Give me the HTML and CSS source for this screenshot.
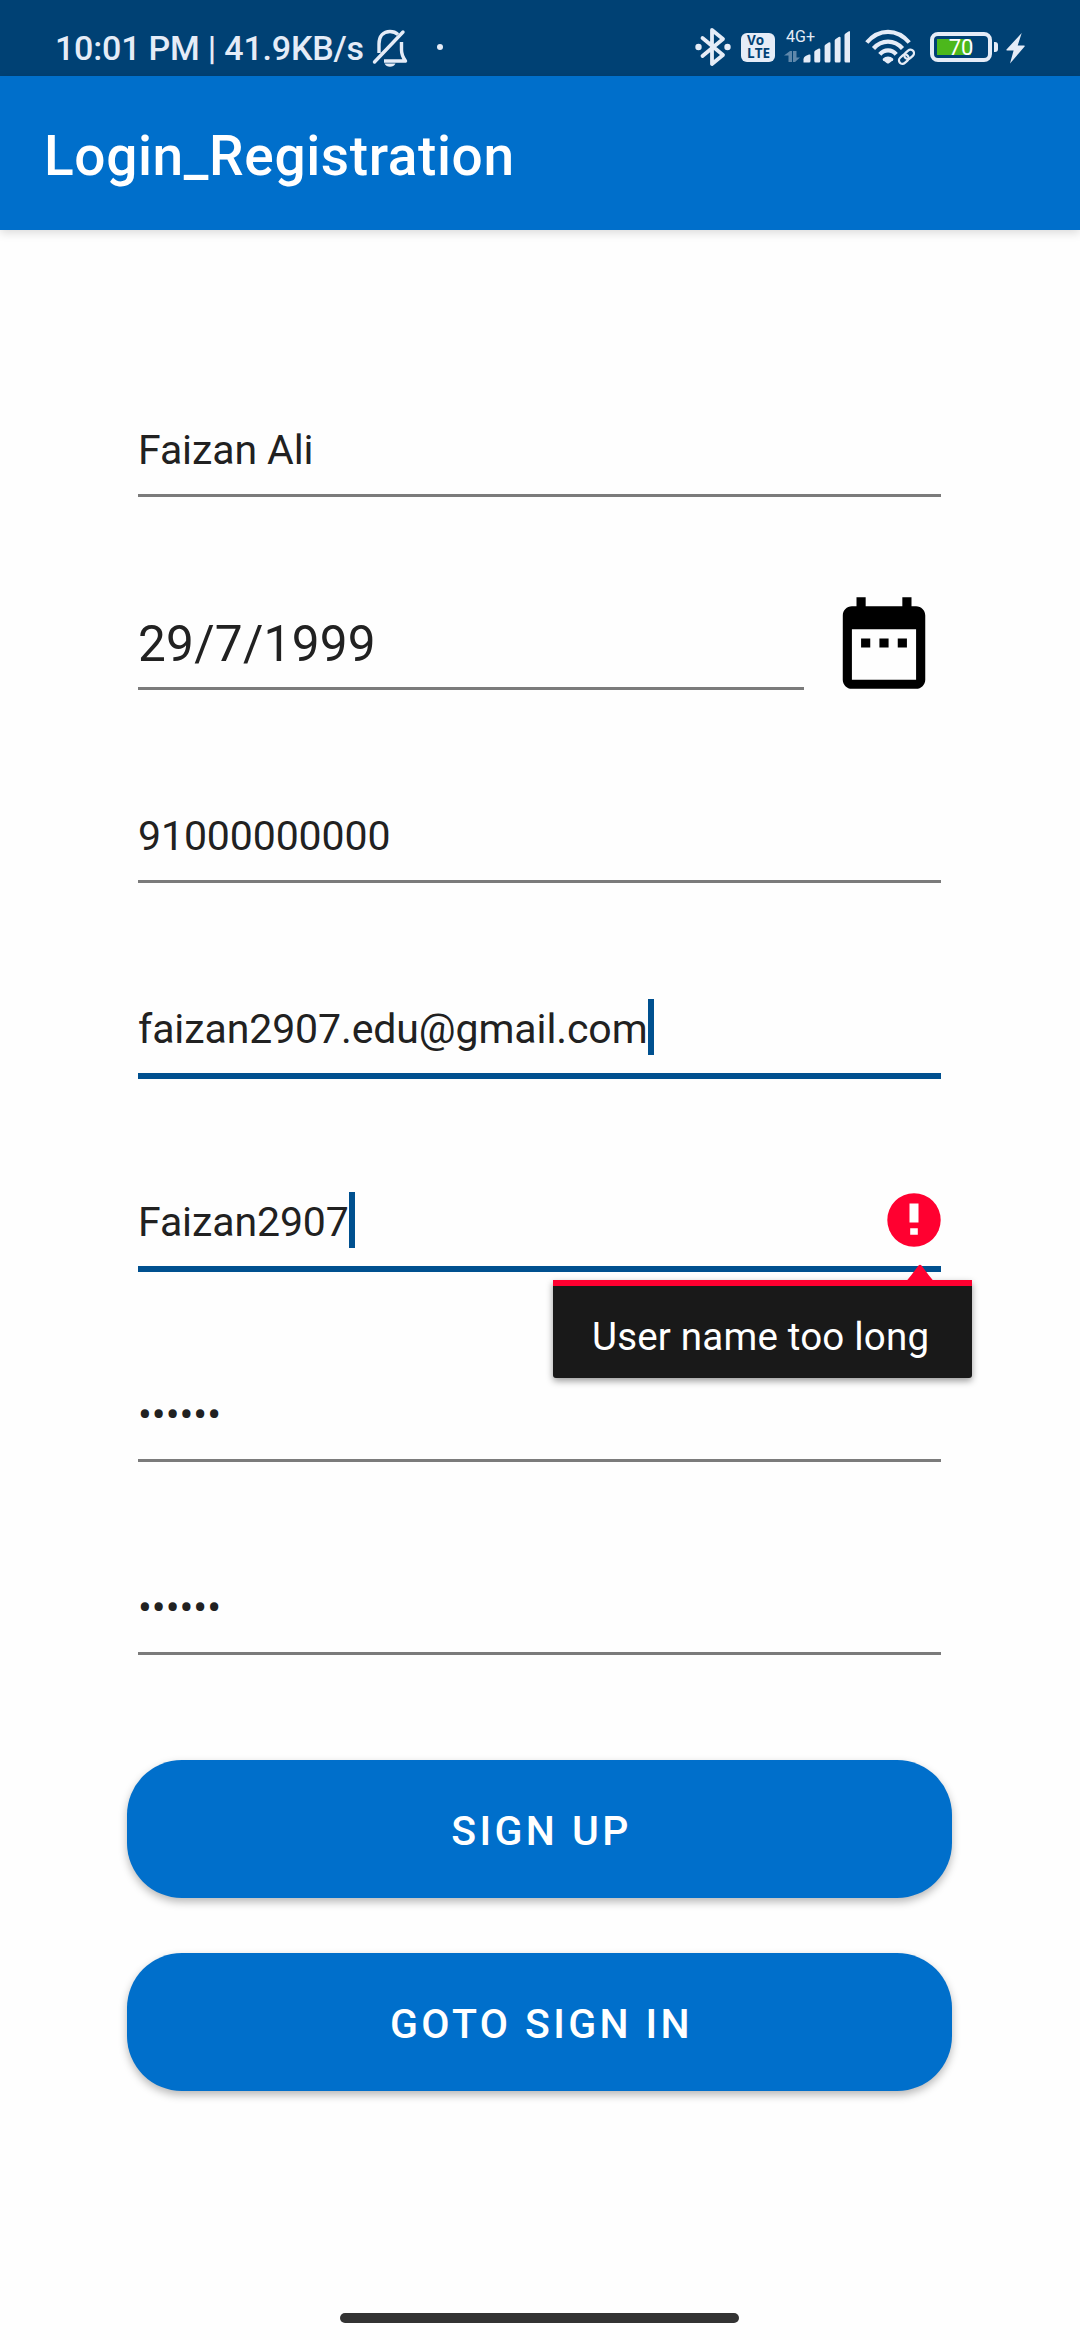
FILE: index.html
```html
<!DOCTYPE html>
<html lang="en">
<head>
<meta charset="utf-8">
<title>Login_Registration</title>
<link rel="stylesheet" href="styles.css">
</head>
<body>
<div class="screen">
  <header class="status">
    <span class="clock">10:01 PM | 41.9KB/s</span>
    <svg class="bell" width="36" height="40" viewBox="0 0 36 40" fill="none" stroke="#e5ecf7" stroke-width="3.4">
      <path d="M2.5 34L31 4" stroke-linecap="round"/>
      <path d="M7 25V16C7 8 11.500 3.500 18 3.500c3.500 0 6 1.100 8 3"/>
      <path d="M29.500 14v8c0 5 1.500 7.500 4 11H12" stroke-linejoin="round"/>
      <path d="M12.500 35.500h11c-1.200 2.400-3 3.300-5.500 3.300s-4.300-.9-5.500-3.300z" fill="#e5ecf7" stroke="none"/>
    </svg>
    <span class="notice-dot"></span>
    <div class="indicators">
      <svg class="bluetooth" width="36" height="40" viewBox="0 0 36 40" fill="none" stroke="#e5ecf7" stroke-width="3.800" stroke-linecap="round" stroke-linejoin="round">
        <path d="M7.500 11L28 28 17 37V3l11 9L7.500 29"/>
        <circle cx="3.500" cy="20" r="3.200" fill="#e5ecf7" stroke="none"/>
        <circle cx="32.500" cy="20" r="3.200" fill="#e5ecf7" stroke="none"/>
      </svg>
      <span class="volte"><span>Vo</span><span>LTE</span></span>
      <div class="mobile">
        <span class="network">4G+</span>
        <svg class="signal" width="66" height="34" viewBox="0 0 66 34" fill="#e5ecf7">
          <path opacity=".42" d="M0 26.500l6-4.500h2v11H4.500v-6.500zM9 22h3.500v6.500H16L11 33H9z"/>
          <path d="M19.500 33.500v-3.200c0-1.500 1-2.800 2.500-3.500l3-1.300q1.500-.5 1.500 1v5.500q0 1.500-1.500 1.500z"/>
          <path d="M30.300 23q0-1 1-1.500l3-1.800q2-.9 2 .8V32q0 1.500-1.500 1.500h-3q-1.500 0-1.500-1.500zM40.600 17q0-1 1-1.500l3-1.900q1.900-.8 1.900.8V32q0 1.500-1.500 1.500h-3q-1.400 0-1.400-1.500zM50.700 11.500q0-1 1-1.500l3-1.900q1.900-.8 1.900.8V32q0 1.500-1.500 1.500h-3q-1.400 0-1.400-1.500zM60.500 6q0-1 1-1.600l2.900-1.900q2-.8 2 .8V32q0 1.500-1.500 1.500H62q-1.500 0-1.500-1.500z"/>
        </svg>
      </div>
      <svg class="wifi" width="50" height="36" viewBox="0 0 50 36" fill="none" stroke="#e5ecf7" stroke-width="4.200">
        <path d="M1.800 13.500C14 -.7 32 -.7 44.200 13.500M8.500 19.500c8-9.200 21-9.200 29 0M14.800 25.300c4.500-5.300 12-5.300 16.400 0"/>
        <path d="M18 29.500c2.500-2.700 7.500-2.700 10 0q.8.900 0 1.700L24.400 34q-1.400 1-2.800 0L18 31.200q-.8-.8 0-1.700z" fill="#e5ecf7" stroke="none"/>
        <g stroke="#004174" stroke-width="6"><path d="M36 33l10-9"/></g>
        <g stroke-width="2.300" transform="rotate(-42 41.500 28)"><rect x="32.800" y="24.300" width="10.500" height="7" rx="3.500"/><rect x="40" y="24.300" width="10.500" height="7" rx="3.500"/></g>
      </svg>
      <div class="battery"><span>70</span></div>
      <i class="battery-nub"></i>
      <svg class="bolt" width="20" height="32" viewBox="0 0 20 32" fill="#e5ecf7"><path d="M15.700 1L.5 17.500q-.5.800.5 1h6.600L4 31.500 18.600 14.500q.6-.9-.5-1h-6.400z"/></svg>
    </div>
  </header>

  <div class="appbar"><h1>Login_Registration</h1></div>

  <main>
    <div class="field"><div class="value">Faizan Ali</div><i class="line"></i></div>
    <div class="date-row">
      <div class="field date"><div class="value">29/7/1999</div><i class="line"></i></div>
      <svg class="calendar" width="110" height="110" viewBox="0 0 24 24"><path d="M9 11H7v2h2v-2zm4 0h-2v2h2v-2zm4 0h-2v2h2v-2zm2-7h-1V2h-2v2H8V2H6v2H5c-1.110 0-1.990.9-1.990 2L3 20c0 1.100.89 2 2 2h14c1.100 0 2-.9 2-2V6c0-1.100-.9-2-2-2zm0 16H5V9h14v11z"/></svg>
    </div>
    <div class="field"><div class="value">91000000000</div><i class="line"></i></div>
    <div class="field focus"><div class="value">faizan2907.edu@gmail.com<i class="caret"></i></div><i class="line"></i></div>
    <div class="field focus">
      <div class="value">Faizan2907<i class="caret"></i>
        <svg class="alert" width="54" height="54" viewBox="0 0 54 54"><circle cx="27" cy="27" r="26.700" fill="#ff0030"/><path d="M22.500 10.500h9v19h-9zM23.200 35.200h7.600v6.600h-7.600z" fill="#fff"/></svg>
      </div>
      <i class="line"></i>
      <div class="error"><svg class="pointer" width="28" height="17" viewBox="0 0 28 17"><path d="M.5 17L5 11.500 12.500 1.500Q14 .2 15.500 1.500L23 11.500 27.500 17z" fill="#ff0030"/></svg>User name too long</div>
    </div>
    <div class="field"><div class="value secret">••••••</div><i class="line"></i></div>
    <div class="field"><div class="value secret">••••••</div><i class="line"></i></div>
    <div class="actions">
      <button>SIGN UP</button>
      <button>GOTO SIGN IN</button>
    </div>
  </main>
  <i class="home"></i>
</div>
</body>
</html>
```
FILE: styles.css
```css
* { box-sizing: border-box; }
body { margin: 0; background: #fefefe; font-family: Roboto, sans-serif; }
i { display: block; }
svg { display: block; flex: none; }
.screen { width: 1080px; height: 2340px; display: flex; flex-direction: column; overflow: hidden; color: #212121; }

.status { height: 76px; flex: none; background: #004174; display: flex; align-items: flex-start; padding-left: 55px; color: #e5ecf7; }
.clock { width: 317px; font-size: 34px; font-weight: 500; line-height: 40px; padding-top: 28px; letter-spacing: -.2px; white-space: nowrap; }
.bell { margin-top: 28px; }
.notice-dot { width: 6px; height: 6px; border-radius: 50%; background: #e5ecf7; margin: 44px 0 0 29px; }
.indicators { display: flex; align-items: flex-start; margin-left: 252px; }
.bluetooth { margin-top: 27px; }
.volte { width: 34px; height: 29px; margin: 33px 0 0 10px; border-radius: 6px; background: #e5ecf7; color: #004174; font: 700 13.5px/13px "Open Sans", sans-serif; padding: 1px 0 0 6px; display: flex; flex-direction: column; }
.mobile { margin: 29px 0 0 9px; width: 68px; display: grid; }
.mobile > * { grid-area: 1 / 1; }
.network { font-size: 16px; line-height: 16px; padding-left: 2px; }
.wifi { margin: 29px 0 0 13px; }
.battery { width: 62px; height: 30px; margin: 32px 0 0 15px; border: 4px solid #e5ecf7; border-radius: 8px; background: linear-gradient(#4cb81c, #4cb81c) 3px 3px / 34px 16px no-repeat; font-size: 22px; line-height: 23px; text-align: center; color: #fff; }
.battery-nub { width: 4px; height: 10px; margin: 42px 0 0 2px; border-radius: 0 3px 3px 0; background: #e5ecf7; }
.bolt { margin: 32px 0 0 8px; }

.appbar { height: 154px; flex: none; background: #006fcb; color: #fff; padding: 48px 0 0 44px; box-shadow: 0 3px 9px rgba(0,0,0,.14); }
h1 { margin: 0; font-size: 55px; font-weight: 500; line-height: 64px; letter-spacing: .62px; }

main { padding: 114px 139px 0 138px; height: 2083px; flex: none; }
.field { height: 193px; position: relative; }
.value { height: 150px; padding-bottom: 16px; display: flex; align-items: flex-end; font-size: 41px; line-height: 56px; letter-spacing: -.1px; }
.secret { letter-spacing: 0; }
.line { height: 3px; background: #7b7b7b; }
.focus .line { height: 6px; background: #00508f; }
.caret { width: 6px; height: 56px; background: #00508f; margin-bottom: 2px; }
.date-row { display: flex; }
.date { width: 666px; }
.date .value { font-size: 49.5px; padding-bottom: 15px; letter-spacing: .25px; }
.calendar { margin: 51px 0 0 25px; }
.alert { margin: 0 0 3px auto; }
.error { position: absolute; left: 415px; top: 164px; z-index: 1; width: 419px; height: 98px; border-top: 6px solid #ff0030; border-radius: 0 0 3px 3px; background: #191919; color: #fff; font-size: 38.5px; line-height: 46px; letter-spacing: .2px; padding: 28px 0 0 39px; white-space: nowrap; box-shadow: 0 3px 7px rgba(0,0,0,.4); }
.pointer { position: absolute; right: 38px; top: -22px; }

.actions { display: flex; flex-direction: column; gap: 55px; margin: 65px -11px 0; }
button { height: 138px; border: 0; border-radius: 55px; background: #006fcb; color: #fff; font: 500 41px/48px Roboto, sans-serif; letter-spacing: 3.4px; padding: 4px 0 0 4px; box-shadow: 0 4px 8px rgba(0,0,0,.28); }
.home { width: 399px; height: 10px; border-radius: 5px; background: #333; margin-left: 340px; }
```
